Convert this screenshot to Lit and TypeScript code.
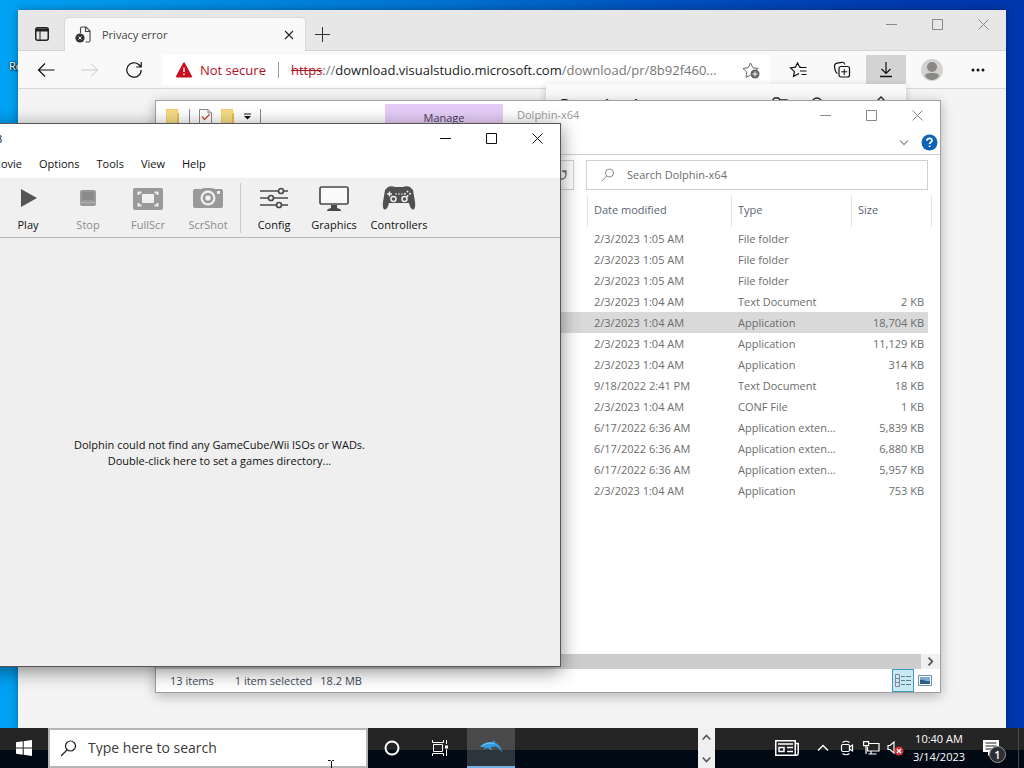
import { LitElement, html, css, svg, nothing } from "lit";
import { customElement } from "lit/decorators.js";
import { classMap } from "lit/directives/class-map.js";

const base = css`
  *, *::before, *::after { box-sizing: border-box; }
  :host { font-family: "Open Sans", "Noto Sans", sans-serif; font-size: 11px; line-height: 16px; white-space: nowrap; }
  button { display: flex; align-items: center; justify-content: center; padding: 0; margin: 0; border: 0; background: none; color: inherit; font: inherit; }
  input { border: 0; padding: 0; margin: 0; background: none; font: inherit; color: inherit; outline: none; min-width: 0; }
  svg { display: block; flex: none; }
`;

const icon = (w: number, h: number, body: unknown) =>
  html`<svg width=${w} height=${h} viewBox="0 0 ${w} ${h}" fill="none" stroke="currentColor" aria-hidden="true">${body}</svg>`;

const minimise = icon(11, 11, svg`<path d="M0 5.5h11"/>`);
const maximise = icon(11, 11, svg`<path d="M.5 .5h10v10h-10z"/>`);
const close = icon(11, 11, svg`<path d="M.5 .5l10 10M10.5 .5l-10 10"/>`);

const windowButtons = html`
  <div class="winbtns">
    <button aria-label="Minimize">${minimise}</button>
    <button aria-label="Maximize">${maximise}</button>
    <button aria-label="Close">${close}</button>
  </div>`;

const winbtnStyles = css`
  .winbtns { display: flex; margin-left: auto; }
  .winbtns button { width: 46px; height: 29px; }
`;

/* ---------- Browser ---------- */

@customElement("edge-window")
class EdgeWindow extends LitElement {
  static styles = [base, winbtnStyles, css`
    :host { display: flex; flex-direction: column; background: #f4f4f4; color: #222; }
    .tabs { display: flex; height: 41px; background: #e7e7e7; border-bottom: 1px solid #d4d4d4; }
    .spaces { width: 47px; padding-top: 8px; }
    .tab { display: flex; align-items: center; gap: 10px; width: 240px; height: 33px; margin-top: 8px; padding: 0 8px 0 10px; background: #f9f9f9; border-radius: 4px 4px 0 0; box-shadow: 0 0 2px #bbb; clip-path: inset(-3px -3px 0 -3px); color: #444; }
    .tab button { margin-left: auto; width: 16px; height: 16px; color: #222; }
    .new { width: 35px; padding-top: 8px; color: #333; }
    .tabs .winbtns { color: #888; }
    .bar { display: flex; align-items: center; height: 38px; background: #f9f9f9; border-bottom: 1px solid #d8d8d8; color: #111; }
    .nav { width: 44px; height: 30px; }
    .nav:first-child { width: 50px; padding-left: 6px; }
    .nav.off { color: #c4c4c4; }
    .address { display: flex; align-items: center; flex: 1; height: 30px; margin: 0 6px; padding: 0 10px 0 14px; background: #fff; font-size: 13px; min-width: 0; }
    .secure { display: flex; align-items: center; gap: 8px; color: #b01020; padding-right: 12px; border-right: 1px solid #999; margin-right: 12px; }
    .url { flex: 1; min-width: 0; color: #767676; }
    .url s { color: #b01020; }
    .url b { font-weight: 400; color: #222; }
    .tools { display: flex; align-items: center; padding-right: 4px; }
    .tools button { width: 44px; height: 30px; }
    .tools .down { width: 40px; background: #d3d3d3; margin: 0 4px 0 2px; }
    .tools .more { width: 48px; }
    .flyout { align-self: flex-end; display: flex; gap: 20px; width: 360px; height: 60px; margin: -5px 100px 0 0; padding: 10px 14px; background: #fafafa; box-shadow: 0 2px 8px #0003; font-size: 16px; line-height: 22px; font-weight: 600; }
    .flyout svg { margin-top: 2px; }
    .flyout svg:first-of-type { margin-left: auto; }
    .flyout svg:last-of-type { margin: 0 0 0 26px; }
    .page { flex: 1; }
  `];
  render() {
    return html`
      <header class="tabs">
        <button class="spaces" aria-label="Tab actions">${icon(14, 14, svg`<rect x=".75" y=".75" width="12.5" height="12.5" rx="2" stroke-width="1.5"/><path d="M1 3h12" stroke-width="3"/><path d="M5 4v9"/>`)}</button>
        <div class="tab">
          ${icon(17, 17, svg`<path d="M5.500 7V2.500a1.500 1.500 0 0 1 1.500-1.500h4l4 4v9.500a1.500 1.500 0 0 1-1.500 1.500H10.500M10.500 1.500V5.500h4" stroke="#444" stroke-width="1.100"/><circle cx="5" cy="12" r="4.600" fill="#333" stroke="none"/><path d="M3.500 10.500l3 3M6.500 10.500l-3 3" stroke="#fff"/>`)}
          <span>Privacy error</span>
          <button aria-label="Close tab">${icon(10, 10, svg`<path d="M1 1l8 8M9 1l-8 8" stroke-width="1.100"/>`)}</button>
        </div>
        <button class="new" aria-label="New tab">${icon(15, 15, svg`<path d="M7.500 0v15M0 7.500h15"/>`)}</button>
        ${windowButtons}
      </header>
      <nav class="bar">
        <button class="nav" aria-label="Back">${icon(18, 16, svg`<path d="M17.500 8H1.500M8 1.500L1.500 8 8 14.500" stroke-width="1.200"/>`)}</button>
        <button class="nav off" aria-label="Forward">${icon(18, 16, svg`<path d="M.500 8h16M10 1.500L16.500 8 10 14.500"/>`)}</button>
        <button class="nav" aria-label="Refresh">${icon(18, 18, svg`<path d="M16.200 9a7.200 7.200 0 1 1-2.200-5.200L16 5.700M16.200 1v5h-5" stroke-width="1.200"/>`)}</button>
        <div class="address">
          <span class="secure">${icon(16, 16, svg`<path d="M8 1.500L15 14.500H1z" fill="#c80f1e" stroke="#c80f1e" stroke-width="2" stroke-linejoin="round"/><path d="M8 5.500v4.500M8 11.500v1.500" stroke="#fff" stroke-width="1.400"/>`)}Not secure</span>
          <span class="url"><s>https</s>://<b>download.visualstudio.microsoft.com</b>/download/pr/8b92f460...</span>
          ${icon(18, 18, svg`<path d="M8.500 14.200L4 16.300l.8-5.200L1 7.500l5.200-.8L8.500 2l2.300 4.700 5.200.8-1.500 1.500" stroke="#666"/><circle cx="13" cy="13" r="4.500" fill="#666" stroke="none"/><path d="M13 10.500v5M10.500 13h5" stroke="#fff"/>`)}
        </div>
        <div class="tools">
          <button class="fav" aria-label="Favorites">${icon(18, 18, svg`<path d="M10 13.200l-.500-.400L4.500 15.500l.9-4.900L1.500 7l5-.8L8.500 1.800l2.200 4.400h1.300M11 6.500h6.500M11 10h6.500M12.500 13.500h5" stroke-width="1.200"/>`)}</button>
          <button aria-label="Collections">${icon(18, 18, svg`<path d="M4.500 12.500C2.800 12 1.500 8 1.500 5c0-1.500 1-2.500 2.500-2.800L9 1.300c1.500-.2 2.500.6 2.800 2" stroke-width="1.200"/><rect x="6" y="5.500" width="10.500" height="10.500" rx="2" stroke-width="1.200"/><path d="M11.250 8v6M8.250 10.800h6"/>`)}</button>
          <button class="down" aria-label="Downloads">${icon(14, 17, svg`<path d="M7 1v11M2.500 8L7 12.500 11.500 8" stroke-width="1.200"/><path d="M1 15.500h12" stroke-width="1.500"/>`)}</button>
          <button class="me" aria-label="Profile">${icon(22, 22, svg`<circle cx="11" cy="11" r="11" fill="#d4d2cf" stroke="none"/><circle cx="11" cy="8" r="5" fill="#8a8886" stroke="none"/><path d="M4 17c0-2 2-3 7-3s7 1 7 3c-1 2-4 4-7 4s-6-2-7-4z" fill="#8a8886" stroke="none"/>`)}</button>
          <button class="more" aria-label="Settings and more">${icon(14, 4, svg`<g fill="currentColor" stroke="none"><circle cx="2" cy="2" r="1.500"/><circle cx="7" cy="2" r="1.500"/><circle cx="12" cy="2" r="1.500"/></g>`)}</button>
        </div>
      </nav>
      <section class="flyout">
        <span>Downloads</span>
        ${icon(18, 16, svg`<path d="M1 13V3.500L2.500 2h4L8 4h7l1.500 1.500V13z" stroke-width="1.300"/>`)}
        ${icon(16, 16, svg`<circle cx="7" cy="7" r="5" stroke-width="1.300"/>`)}
        ${icon(20, 16, svg`<path d="M4 8l5-5 5 5" stroke-width="1.300"/>`)}
      </section>
      <main class="page"></main>`;
  }
}

/* ---------- File Explorer ---------- */

const files: [string, string, string][] = [
  ["2/3/2023 1:05 AM", "File folder", ""],
  ["2/3/2023 1:05 AM", "File folder", ""],
  ["2/3/2023 1:05 AM", "File folder", ""],
  ["2/3/2023 1:04 AM", "Text Document", "2 KB"],
  ["2/3/2023 1:04 AM", "Application", "18,704 KB"],
  ["2/3/2023 1:04 AM", "Application", "11,129 KB"],
  ["2/3/2023 1:04 AM", "Application", "314 KB"],
  ["9/18/2022 2:41 PM", "Text Document", "18 KB"],
  ["2/3/2023 1:04 AM", "CONF File", "1 KB"],
  ["6/17/2022 6:36 AM", "Application exten...", "5,839 KB"],
  ["6/17/2022 6:36 AM", "Application exten...", "6,880 KB"],
  ["6/17/2022 6:36 AM", "Application exten...", "5,957 KB"],
  ["2/3/2023 1:04 AM", "Application", "753 KB"],
];
const selectedRow = 4;

@customElement("explorer-window")
class ExplorerWindow extends LitElement {
  static styles = [base, winbtnStyles, css`
    :host { display: flex; flex-direction: column; background: #fff; border: 1px solid #a0a0a0; box-shadow: 0 3px 12px #0004; color: #6d6d6d; }
    .title { display: flex; height: 30px; color: #999; }
    .quick { display: flex; align-items: center; gap: 9px; width: 229px; padding-left: 10px; }
    .quick i { width: 1px; height: 14px; background: #888; }
    .manage { width: 118px; margin-top: 3px; padding-top: 6px; background: #e5cdf7; color: #4b3a5c; text-align: center; }
    .name { padding: 6px 0 0 14px; }
    .title .winbtns { color: #888; }
    .ribbon { display: flex; justify-content: flex-end; align-items: center; gap: 12px; height: 24px; padding-right: 2px; border-bottom: 1px solid #d0d0d0; }
    .find { display: flex; gap: 12px; padding: 5px 12px 5px 8px; }
    .path { display: flex; align-items: center; justify-content: flex-end; flex: 1; height: 30px; padding-right: 6px; border: 1px solid #d0d0d0; }
    .search { display: flex; align-items: center; gap: 12px; width: 342px; height: 30px; padding-left: 14px; border: 1px solid #d0d0d0; }
    .search input { flex: 1; }
    .search input::placeholder { color: #6d6d6d; opacity: 1; }
    .list { flex: 1; padding-right: 8px; }
    table { width: 100%; border-collapse: separate; border-spacing: 0; table-layout: fixed; }
    th, td { padding: 0 0 0 6px; text-align: left; font-weight: 400; height: 21px; line-height: 16px; }
    thead th { height: 32px; border-right: 1px solid #e6e6e6; color: #5b6470; padding-bottom: 2px; }
    tbody::before { content: ""; display: block; height: 1px; }
    .date { width: 144px; } .type { width: 120px; } .size { width: 80px; }
    td:last-child { text-align: right; padding-right: 4px; border-right: 4px solid #fff; }
    .sel td { background: #d9d9d9; }
    .scroll { display: flex; height: 15px; background: #f0f0f0; }
    .thumb { flex: 1; background: #cdcdcd; }
    .scroll button { width: 19px; color: #505050; }
    .status { display: flex; align-items: center; height: 23px; padding: 0 4px 0 14px; color: #3c4a5a; }
    .status span { margin-right: 21px; }
    .status span + span { margin-right: 8px; }
    .views { display: flex; margin-left: auto; }
    .views button { width: 22px; height: 23px; }
    .views .on { background: #c9e8f5; border: 1px solid #3c9cc0; }
  `];
  render() {
    const folder = icon(14, 16, svg`<path d="M0 1h12v15H0z" fill="#f0d16e" stroke="none"/><path d="M10 16V6l3-1v11z" fill="#e6c050" stroke="none"/><path d="M1 2h10v13H1z" fill="#f6dc84" stroke="none"/>`);
    return html`
      <header class="title">
        <div class="quick">
          ${folder}<i></i>
          ${icon(13, 15, svg`<path d="M.500 .500H9l3.500 3.500v10.500h-12z" fill="#fff" stroke="#888"/><path d="M9 .500V4h3.500" stroke="#888"/><path d="M3 7.500l2.500 3 5-5" stroke="#d0503a" stroke-width="1.500"/>`)}
          ${folder}
          ${icon(7, 7, svg`<path d="M0 1h7" stroke="#111"/><path d="M0 3h7L3.500 6.500z" fill="#111" stroke="none"/>`)}
          <i></i>
        </div>
        <div class="manage">Manage</div>
        <span class="name">Dolphin-x64</span>
        ${windowButtons}
      </header>
      <div class="ribbon">
        ${icon(10, 6, svg`<path d="M1 .500l4 4 4-4" stroke="#999" stroke-width="1.300"/>`)}
        ${icon(17, 17, svg`<circle cx="8.500" cy="8.500" r="8" fill="#0c63b8" stroke="none"/><path d="M6 6.800c0-1.600 1-2.500 2.500-2.500s2.500.8 2.500 2.200c0 1.800-2.400 1.700-2.400 3.500M8.600 11.400v1.700" stroke="#fff" stroke-width="1.700"/>`)}
      </div>
      <div class="find">
        <div class="path">${icon(10, 10, svg`<path d="M5 1a4 4 0 1 1-3.500 2M5 1h4v3" stroke="#777" stroke-width="1.300"/>`)}</div>
        <label class="search">
          ${icon(14, 14, svg`<circle cx="8.500" cy="5" r="4" stroke="#888"/><path d="M5.500 8L1 13" stroke="#888"/>`)}
          <input type="text" placeholder="Search Dolphin-x64" aria-label="Search Dolphin-x64">
        </label>
      </div>
      <div class="list">
        <table>
          <thead><tr><th aria-label="Name"></th><th class="date">Date modified</th><th class="type">Type</th><th class="size">Size</th></tr></thead>
          <tbody>
            ${files.map(([date, type, size], i) => html`
              <tr class=${classMap({ sel: i === selectedRow })}><td></td><td>${date}</td><td>${type}</td><td>${size || nothing}</td></tr>`)}
          </tbody>
        </table>
      </div>
      <div class="scroll"><div class="thumb"></div><button aria-label="Scroll right">${icon(7, 9, svg`<path d="M1.500 .700L5.300 4.500 1.500 8.300" stroke-width="1.700"/>`)}</button></div>
      <footer class="status">
        <span>13 items</span><span>1 item selected</span><span>18.2 MB</span>
        <div class="views">
          <button class="on" aria-label="Details">${icon(16, 13, svg`<path d="M.500 .500h4v12h-4zM.500 4.500h4M.500 8.500h4" stroke="#8a7f9a"/><path d="M6 2.500h4M11 2.500h5M6 6.500h4M11 6.500h5M6 10.500h4M11 10.500h5" stroke="#5a7f94"/>`)}</button>
          <button aria-label="Large icons">${icon(14, 11, svg`<path d="M.500 .500h13v10h-13z" fill="#fff" stroke="#6f8fa8"/><path d="M2 2h10v7H2z" fill="#7da8d0" stroke="none"/><path d="M2 5c3-1 6 2 10 1v3H2z" fill="#2c5c88" stroke="none"/>`)}</button>
        </div>
      </footer>`;
  }
}

/* ---------- Dolphin ---------- */

const toolIcons = {
  play: icon(32, 28, svg`<path d="M9 5l16 9-16 9z" fill="#555" stroke="none"/>`),
  stop: icon(32, 28, svg`<rect x="8" y="6" width="16" height="16" rx="2" fill="#9a9a9a" stroke="none"/><path d="M10 8h12v8H10z" fill="#8a8a8a" stroke="none"/><path d="M8 18.500h16" stroke="#b4b4b4"/>`),
  full: icon(32, 28, svg`<rect x="1" y="4" width="30" height="22" rx="2" fill="#999" stroke="none"/><rect x="10" y="10" width="12" height="9" rx="1" fill="#f0f0f0" stroke="none"/><path d="M6.500 11V8.500h3M22.500 8.500h3V11M6.500 19v2.500h3M22.500 21.500h3V19" stroke="#eee" stroke-width="2"/>`),
  shot: icon(32, 28, svg`<path d="M3 5h26a2 2 0 0 1 2 2v15a2 2 0 0 1-2 2H3a2 2 0 0 1-2-2V7a2 2 0 0 1 2-2z" fill="#999" stroke="none"/><path d="M9 5l3-1h8l3 1z" fill="#999" stroke="none"/><circle cx="16" cy="14" r="7.500" fill="#f0f0f0" stroke="none"/><circle cx="16" cy="14" r="4" stroke="#999" stroke-width="2.500"/><path d="M25 7h3v3h-3z" fill="#eee" stroke="none"/>`),
  config: icon(32, 28, svg`<g stroke="#4a4a4a" stroke-width="1.700"><path d="M2 7h18M26 7h4M2 14h8M16 14h14M2 21h16M24 21h6"/><circle cx="23" cy="7" r="2.500"/><circle cx="13" cy="14" r="2.500"/><circle cx="21" cy="21" r="2.500"/></g>`),
  graphics: icon(32, 28, svg`<rect x="2" y="3" width="28" height="17" rx="1.500" fill="#fafafa" stroke="#4a4a4a" stroke-width="1.700"/><path d="M13 21h6v3c2 .5 4 1 4 3H9c0-2 2-2.500 4-3z" fill="#4a4a4a" stroke="none"/>`),
  pad: icon(34, 28, svg`<path d="M6 3c2-1 5-1 7 0h8c2-1 5-1 7 0l3 3 2 12c.5 4 0 7-1.500 7.500-2 .5-3.500-2-4.500-6.500H7c-1 4.500-2.500 7-4.500 6.500C1 25 .5 22 1 18L3 6z" fill="#505050" stroke="none"/><g stroke="#eee" stroke-width="1.500"><path d="M7.500 7.500v5M5 10h5"/><circle cx="11.500" cy="15" r="2.500" fill="#505050"/><circle cx="22.500" cy="15" r="2.500" fill="#505050"/></g><g fill="#eee" stroke="none"><circle cx="14" cy="10" r=".8"/><circle cx="17" cy="10" r=".8"/><circle cx="20" cy="10" r=".8"/><circle cx="25.500" cy="7.500" r="1"/><circle cx="25.500" cy="12" r="1"/><circle cx="28" cy="9.800" r="1"/><circle cx="23" cy="9.800" r="1"/></g>`),
};

@customElement("dolphin-window")
class DolphinWindow extends LitElement {
  static styles = [base, winbtnStyles, css`
    :host { display: flex; flex-direction: column; background: #efefef; border: 1px solid #555; box-shadow: 0 4px 18px #0007; color: #111; }
    .title { display: flex; align-items: center; height: 29px; background: #fff; padding-left: 117px; }
    .menu { display: flex; gap: 17px; height: 25px; padding: 0 0 4px 112px; background: #fff; }
    .tools { display: flex; height: 60px; padding-left: 119px; border-bottom: 1px solid #b8b8b8; background: #f0f0f0; }
    .tools button { flex-direction: column; justify-content: flex-start; gap: 5px; width: 60px; padding-top: 6px; }
    .tools button:disabled { color: #8c8c8c; }
    .tools .wide { width: 70px; }
    .tools hr { width: 1px; height: 50px; margin: 5px 3px 0 2px; border: 0; background: #ccc; }
    .body { flex: 1; display: flex; align-items: center; justify-content: center; text-align: center; white-space: pre-line; padding-top: 1px; }
  `];
  render() {
    const tool = (label: string, pic: unknown, off = false, wide = false) =>
      html`<button class=${classMap({ wide })} ?disabled=${off}>${pic}<span>${label}</span></button>`;
    return html`
      <header class="title"><span>3</span>${windowButtons}</header>
      <nav class="menu">${["Movie", "Options", "Tools", "View", "Help"].map((m) => html`<button>${m}</button>`)}</nav>
      <div class="tools">
        ${tool("Play", toolIcons.play)}${tool("Stop", toolIcons.stop, true)}${tool("FullScr", toolIcons.full, true)}${tool("ScrShot", toolIcons.shot, true)}
        <hr>
        ${tool("Config", toolIcons.config)}${tool("Graphics", toolIcons.graphics)}${tool("Controllers", toolIcons.pad, false, true)}
      </div>
      <main class="body">Dolphin could not find any GameCube/Wii ISOs or WADs.
Double-click here to set a games directory...</main>`;
  }
}

/* ---------- Taskbar ---------- */

@customElement("task-bar")
class TaskBar extends LitElement {
  static styles = [base, css`
    :host { display: flex; height: 40px; color: #fff; background: linear-gradient(#252525 22px, #010a14 22px); }
    .start { width: 48px; }
    .search { display: flex; align-items: center; gap: 11px; flex: 0 1 320px; padding-left: 10px; background: #fff; border: 2px solid #b4b4b4; color: #222; font-size: 14px; }
    .search input { flex: 1; }
    .search input::placeholder { color: #3a3a3a; opacity: 1; }
    .app { width: 48px; }
    .active { margin-left: 3px; background: #ffffff2c; border-bottom: 2px solid #76b0e6; }
    .spin { display: flex; flex-direction: column; justify-content: space-between; width: 17px; margin-left: auto; background: #f0f0f0; color: #555; }
    .spin button { width: 17px; height: 18px; }
    .tray { display: flex; align-items: center; margin-left: 60px; }
    .tray button { width: 24px; height: 40px; }
    .tray .news { width: 24px; margin-right: 12px; }
    .clock { width: 64px; text-align: center; line-height: 18px; }
    .notes { position: relative; width: 47px; padding-left: 12px; }
    .badge { position: absolute; left: 18px; top: 6px; width: 17px; height: 17px; border-radius: 50%; border: 1px solid #999; background: #2c2f33; line-height: 15px; text-align: center; font-weight: 600; }
    .peek { align-self: stretch; width: 6px; border-left: 1px solid #445; }
  `];
  render() {
    return html`
      <button class="start" aria-label="Start">${icon(16, 16, svg`<path d="M0 2.300L6.700 1.300V7.500H0zM7.700 1.200L16 0v7.500H7.700zM0 8.500h6.700v6.200L0 13.700zM7.700 8.500H16V16l-8.300-1.200z" fill="#fff" stroke="none"/>`)}</button>
      <label class="search">${icon(17, 17, svg`<circle cx="10.500" cy="6" r="5" stroke-width="1.200"/><path d="M7 10L1 16" stroke-width="1.200"/>`)}<input type="text" placeholder="Type here to search" aria-label="Type here to search"></label>
      <button class="app" aria-label="Cortana">${icon(16, 16, svg`<circle cx="8" cy="8" r="6.500" stroke-width="2"/>`)}</button>
      <button class="app" aria-label="Task view">${icon(16, 16, svg`<path d="M1.500 4.500h9v7h-9zM.500 0v2.500h11V0M.500 16v-2.500h11V16M14.500 0v4M14.500 9.500V16"/><path d="M13 5.500h3v3h-3z" fill="#fff" stroke="none"/>`)}</button>
      <button class="app active" aria-label="Dolphin">${icon(24, 16, svg`<path d="M1 8C4 4 8 2.500 13 3l3-1.500L16 3.500c3.500 1.500 6.500 4.500 7 10.500-2-4.500-5-6.500-8-6.500l-3 .5 1 3.500-4-2.500-5 1 2-2z" fill="#2f9de0" stroke="none"/><path d="M2 7.500c4-3 8-4 13-3" stroke="#7fcaf2"/>`)}</button>
      <div class="spin">
        <button aria-label="Up">${icon(9, 7, svg`<path d="M.700 5.500L4.500 1.500 8.300 5.500" stroke-width="1.600"/>`)}</button>
        <button aria-label="Down">${icon(9, 7, svg`<path d="M.700 1.500L4.500 5.500 8.300 1.500" stroke-width="1.600"/>`)}</button>
      </div>
      <div class="tray">
        <button class="news" aria-label="News">${icon(24, 16, svg`<path d="M.750 .750h19.500v14.500H.750zM20.500 3.500h2.700v10q0 1.700-1.700 1.700H19" stroke-width="1.500"/><path d="M3 4h15M12 7.500h6M12 11.500h6" stroke-width="1.500"/><path d="M4 7.500h5v4H4z" stroke-width="1.500"/>`)}</button>
        <button aria-label="Show hidden icons">${icon(12, 8, svg`<path d="M1 6.500L6 1.500 11 6.500" stroke-width="1.400"/>`)}</button>
        <button aria-label="Meet now">${icon(14, 16, svg`<rect x="1.500" y="4.500" width="8" height="7" rx="1.500" stroke-width="1.200"/><path d="M9.500 7l3-2v6l-3-2M2.500 2.500q3.500-2.500 7 0M2.500 13.500q3.500 2.500 7 0" stroke-width="1.200"/>`)}</button>
        <button aria-label="Network">${icon(17, 14, svg`<path d="M6 2.500h10v7.500H4.500V6M8 10v3M5.500 13h8" stroke-width="1.200"/><path d="M.600 .600h5v4h-5zM3 5v8" stroke-width="1.200"/>`)}</button>
        <button aria-label="Volume muted">${icon(17, 16, svg`<path d="M1 5.500h2L7 2v11L3 9.500H1z" stroke-width="1.200"/><circle cx="12" cy="11" r="4.500" fill="#d13438" stroke="none"/><path d="M10 9l4 4M14 9l-4 4" stroke-width="1.200"/>`)}</button>
        <time class="clock">10:40 AM<br>3/14/2023</time>
        <div class="notes">
          ${icon(16, 16, svg`<path d="M0 0h16v12H9L5 16v-4H0z" fill="#fff" stroke="none"/><path d="M2.500 3h11M2.500 6h11M2.500 9h8" stroke="#222"/>`)}
          <span class="badge">1</span>
        </div>
        <div class="peek"></div>
      </div>`;
  }
}

/* ---------- Desktop ---------- */

@customElement("app-root")
class AppRoot extends LitElement {
  static styles = [base, css`
    :host { display: flex; flex-direction: column; height: 100vh; overflow: hidden; position: relative; background: linear-gradient(90deg, #00a2f4, #0086dd 25%, #0070d0 45%, #0050bd 65%, #003cb0 85%, #0036ae); }
    .desktop { position: relative; flex: 1; overflow: hidden; }
    .shortcut { position: absolute; left: 9px; top: 58px; color: #fff; text-shadow: 1px 1px 2px #000, 0 0 2px #000; }
    edge-window { position: absolute; left: 18px; right: 18px; top: 10px; bottom: 0; box-shadow: 0 0 8px #0005; }
    explorer-window { position: absolute; left: 155px; right: 83px; top: 100px; bottom: 35px; }
    dolphin-window { position: absolute; left: -122px; right: 463px; top: 123px; bottom: 61px; }
    .cursor { position: absolute; left: 327px; bottom: 0; color: #111; }
  `];
  render() {
    return html`
      <div class="desktop">
        <span class="shortcut">Recycle</span>
        <edge-window></edge-window>
        <explorer-window></explorer-window>
        <dolphin-window></dolphin-window>
      </div>
      <task-bar></task-bar>
      <span class="cursor">${icon(8, 9, svg`<path d="M1 1.500h2.500l1 1 1-1H7M4.500 2v7"/>`)}</span>`;
  }
}
